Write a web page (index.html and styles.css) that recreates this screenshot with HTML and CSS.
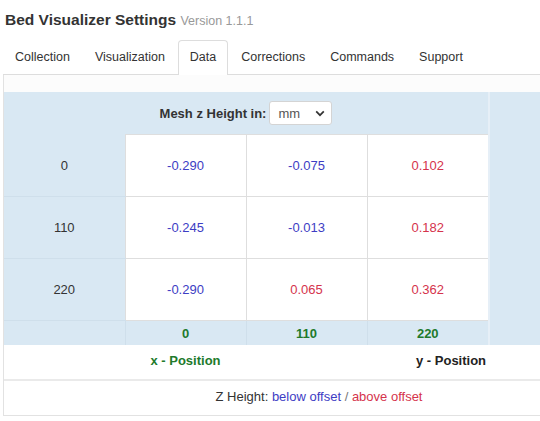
FILE: index.html
```html
<!DOCTYPE html>
<html>
<head>
<meta charset="utf-8">
<link rel="stylesheet" href="styles.css">
</head>
<body>
<div class="page">
  <h1 class="title">Bed Visualizer Settings <small class="version">Version 1.1.1</small></h1>
  <ul class="tabs">
    <li><a>Collection</a></li>
    <li><a>Visualization</a></li>
    <li class="active"><a>Data</a></li>
    <li><a>Corrections</a></li>
    <li><a>Commands</a></li>
    <li><a>Support</a></li>
  </ul>
  <div class="content">
    <table class="mesh">
      <colgroup>
        <col class="c1"><col class="c2"><col class="c3"><col class="c4"><col class="c5">
      </colgroup>
      <tr class="head">
        <td colspan="4">
          <div class="unit">
            <span class="unit-label">Mesh z Height in:</span>
            <span class="select"><span class="select-text">mm</span>
              <svg class="chev" width="10" height="7" viewBox="0 0 10 7"><path d="M1.2 1.4 L5 5.2 L8.8 1.4" fill="none" stroke="#333" stroke-width="1.7"/></svg>
            </span>
          </div>
        </td>
        <td class="side" rowspan="5"></td>
      </tr>
      <tr class="row">
        <th>0</th>
        <td class="neg">-0.290</td>
        <td class="neg">-0.075</td>
        <td class="pos">0.102</td>
      </tr>
      <tr class="row">
        <th>110</th>
        <td class="neg">-0.245</td>
        <td class="neg">-0.013</td>
        <td class="pos">0.182</td>
      </tr>
      <tr class="row">
        <th>220</th>
        <td class="neg">-0.290</td>
        <td class="pos">0.065</td>
        <td class="pos">0.362</td>
      </tr>
      <tr class="foot">
        <th></th>
        <td>0</td>
        <td>110</td>
        <td>220</td>
      </tr>
      <tr class="axes">
        <td colspan="3" class="xpos">x - Position</td>
        <td colspan="2" class="ypos">y - Position</td>
      </tr>
      <tr class="legend">
        <td colspan="5">Z Height: <span class="neg">below offset</span> <span class="slash">/</span> <span class="pos">above offset</span></td>
      </tr>
    </table>
  </div>
</div>
</body>
</html>
```

FILE: styles.css
```css
html, body {
  margin: 0;
  padding: 0;
  overflow: hidden;
  background: #fff;
}
body {
  font-family: "Liberation Sans", Arial, sans-serif;
  font-size: 13px;
  color: #333;
}
.page {
  width: 640px;
}
.title {
  margin: 0;
  padding: 10px 5px 0;
  font-size: 15.5px;
  line-height: 20px;
  font-weight: bold;
  color: #333;
}
.version {
  font-size: 12.5px;
  font-weight: normal;
  color: #999;
}
.tabs {
  list-style: none;
  margin: 9px 0 0 3px;
  padding: 0;
  display: flex;
  border-bottom: 1px solid #ddd;
  font-size: 12.5px;
}
.tabs li {
  margin-right: 1px;
  margin-bottom: -1px;
}
.tabs a {
  display: block;
  padding: 7px 11px 8px;
  line-height: 18px;
  border: 1px solid transparent;
  border-bottom: 0;
  border-radius: 4px 4px 0 0;
  color: #333;
}
.tabs li.active a {
  border-color: #ddd;
  background: #fff;
  padding-bottom: 9px;
}
.content {
  margin-left: 3px;
  padding-top: 17px;
  border-left: 1px solid #e2e2e2;
  border-bottom: 1px solid #e2e2e2;
  background: #fcfcfc;
  width: 630px;
}
.mesh {
  border-collapse: collapse;
  table-layout: fixed;
  width: 630px;
}
.c1 { width: 121px; }
.c2 { width: 121px; }
.c3 { width: 121px; }
.c4 { width: 122px; }
.c5 { width: 145px; }
.mesh td, .mesh th {
  padding: 0;
  text-align: center;
  font-weight: normal;
}
.head td {
  height: 42px;
  background: #d9e8f3;
}
.head .side {
  background: #d9e8f3;
  border-left: 2px solid #e6eff7;
}
.unit {
  display: flex;
  align-items: center;
  justify-content: center;
  gap: 3px;
}
.unit-label {
  font-weight: bold;
  color: #333;
}
.select {
  position: relative;
  display: inline-flex;
  align-items: center;
  width: 61px;
  height: 22px;
  border: 1px solid #d4d4d4;
  border-radius: 3px;
  background: #fff;
  box-sizing: content-box;
}
.select-text {
  padding-left: 8px;
  color: #555;
}
.chev {
  position: absolute;
  right: 6px;
  top: 8px;
}
.row th {
  height: 61px;
  background: #d9e8f3;
  color: #333;
  border-bottom: 1px solid #cfdfeb;
}
.row td {
  height: 61px;
  background: #fff;
  border: 1px solid #dedede;
}
.neg { color: #3d3dc4; }
.pos { color: #d5334c; }
.foot th, .foot td {
  height: 24px;
  background: #d9e8f3;
  color: #217a2b;
  font-weight: bold;
  border-top: 1px solid #cadbe7;
}
.foot td {
  border-left: 1px solid #cfdfeb;
}
.axes td {
  height: 31px;
  padding-bottom: 3px;
  background: #fff;
  font-weight: bold;
  border-bottom: 2px solid #eaeaea;
}
.xpos {
  color: #217a2b;
}
.mesh .ypos {
  color: #222;
  text-align: left;
  padding-left: 49px;
}
.legend td {
  height: 30px;
  padding-bottom: 4px;
  background: #fff;
  color: #333;
}
.slash { color: #777; }
```
